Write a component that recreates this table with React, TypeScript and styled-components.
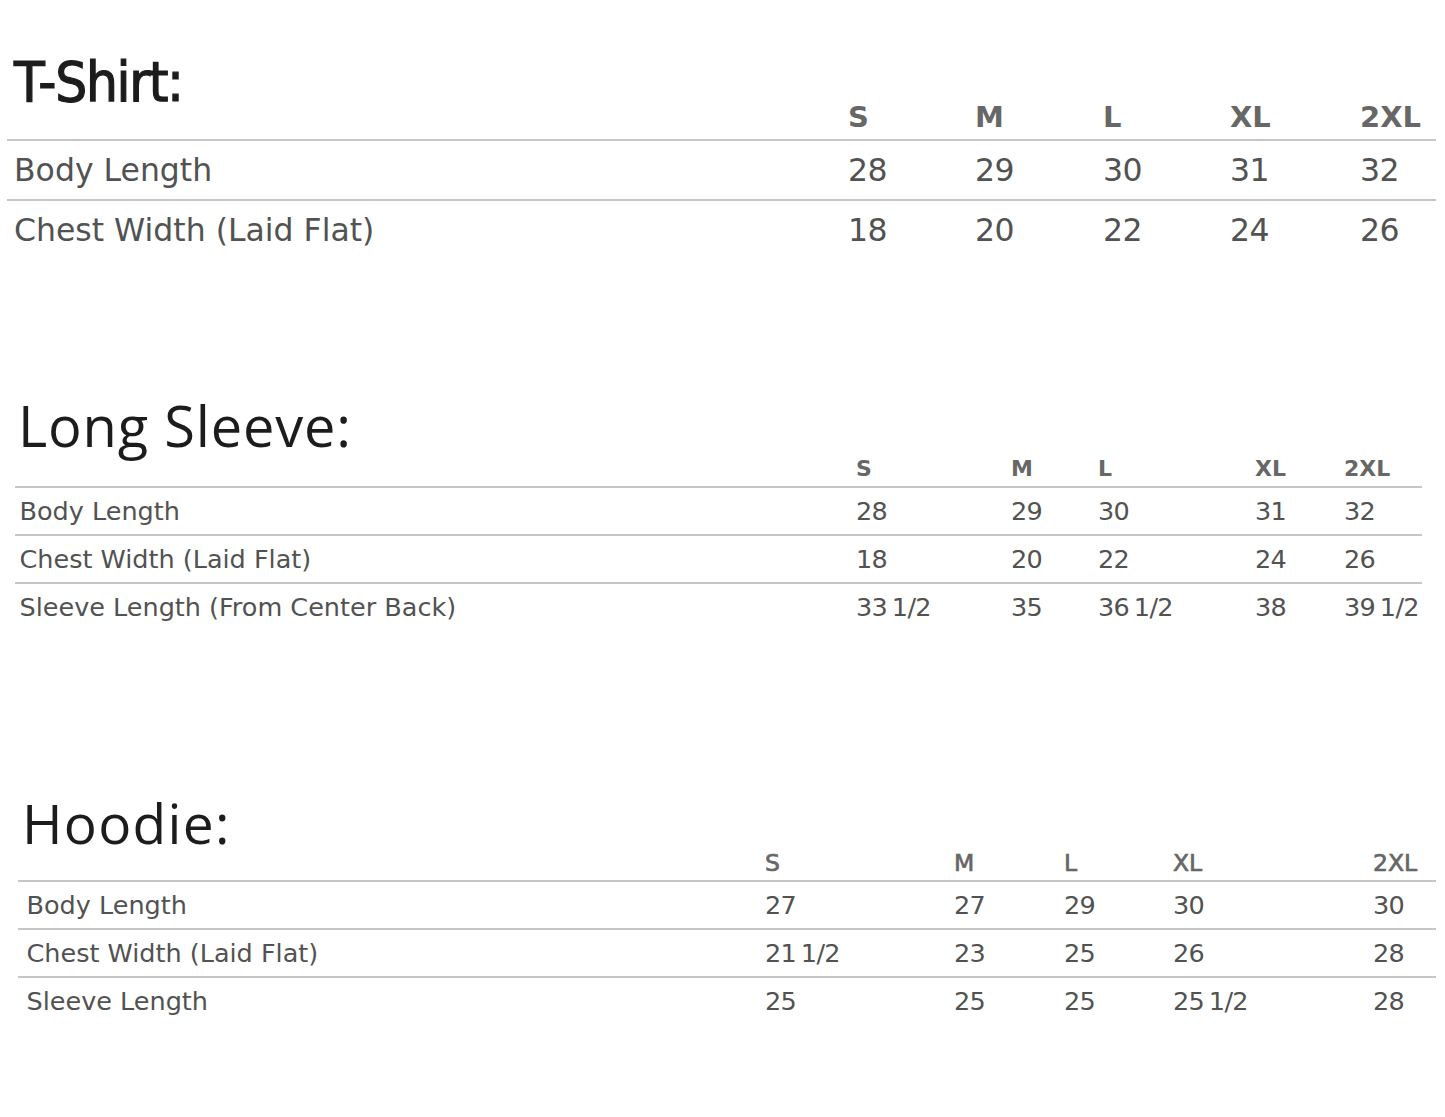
import React from "react";
import styled, { createGlobalStyle } from "styled-components";

type Chart = {
  title: string;
  titleFont: string;
  titleSize: number;
  titleSpacing: number;
  titleStroke: number;
  titleTop: number;
  titleLeft: number;
  titleLine: number;
  tableLeft: number;
  tableWidth: number;
  labelPad: number;
  columns: string;
  headSize: number;
  headWeight: number;
  headLine: number;
  headPad: number;
  headGap: number;
  rowSize: number;
  rowLine: number;
  sizes: string[];
  rows: { label: string; values: string[] }[];
};

const charts: Chart[] = [
  {
    title: "T-Shirt:",
    titleFont: `"DejaVu Sans Condensed", "DejaVu Sans", sans-serif`,
    titleSize: 56,
    titleSpacing: -1.3,
    titleStroke: 1.2,
    titleTop: 57,
    titleLeft: 14,
    titleLine: 49,
    tableLeft: 7,
    tableWidth: 1429,
    labelPad: 7,
    columns: "841px 127px 128px 127px 130px 1fr",
    headSize: 29,
    headWeight: 700,
    headLine: 22,
    headPad: 11,
    headGap: 0,
    rowSize: 31.5,
    rowLine: 58,
    sizes: ["S", "M", "L", "XL", "2XL"],
    rows: [
      { label: "Body Length", values: ["28", "29", "30", "31", "32"] },
      { label: "Chest Width (Laid Flat)", values: ["18", "20", "22", "24", "26"] },
    ],
  },
  {
    title: "Long Sleeve:",
    titleFont: `"Open Sans", sans-serif`,
    titleSize: 56,
    titleSpacing: 0.8,
    titleStroke: 0,
    titleTop: 138,
    titleLeft: 18,
    titleLine: 56,
    tableLeft: 15,
    tableWidth: 1407,
    labelPad: 4.5,
    columns: "841px 155px 87px 157px 89px 1fr",
    headSize: 22,
    headWeight: 700,
    headLine: 22,
    headPad: 6,
    headGap: 5.4,
    rowSize: 25.5,
    rowLine: 46,
    sizes: ["S", "M", "L", "XL", "2XL"],
    rows: [
      { label: "Body Length", values: ["28", "29", "30", "31", "32"] },
      { label: "Chest Width (Laid Flat)", values: ["18", "20", "22", "24", "26"] },
      {
        label: "Sleeve Length (From Center Back)",
        values: ["33 1/2", "35", "36 1/2", "38", "39 1/2"],
      },
    ],
  },
  {
    title: "Hoodie:",
    titleFont: `"Open Sans", sans-serif`,
    titleSize: 55,
    titleSpacing: 1.3,
    titleStroke: 0,
    titleTop: 165,
    titleLeft: 22,
    titleLine: 55,
    tableLeft: 18,
    tableWidth: 1418,
    labelPad: 8.5,
    columns: "747px 189px 110px 109px 200px 1fr",
    headSize: 23.5,
    headWeight: 400,
    headLine: 23,
    headPad: 5.5,
    headGap: 1.6,
    rowSize: 25.5,
    rowLine: 46,
    sizes: ["S", "M", "L", "XL", "2XL"],
    rows: [
      { label: "Body Length", values: ["27", "27", "29", "30", "30"] },
      { label: "Chest Width (Laid Flat)", values: ["21 1/2", "23", "25", "26", "28"] },
      { label: "Sleeve Length", values: ["25", "25", "25", "25 1/2", "28"] },
    ],
  },
];

const App: React.FC = () => (
  <>
    <GlobalStyle />
    <Page>
      {charts.map((c) => (
        <Section key={c.title} $top={c.titleTop}>
          <Title
            $font={c.titleFont}
            $size={c.titleSize}
            $spacing={c.titleSpacing}
            $stroke={c.titleStroke}
            $left={c.titleLeft}
            $line={c.titleLine}
          >
            {c.title}
          </Title>
          <Table $left={c.tableLeft} $width={c.tableWidth} $gap={c.headGap}>
            <HeadRow $columns={c.columns} $pad={c.headPad}>
              <HeadCell $size={c.headSize} $weight={c.headWeight} $line={c.headLine} />
              {c.sizes.map((s) => (
                <HeadCell key={s} $size={c.headSize} $weight={c.headWeight} $line={c.headLine}>
                  {s}
                </HeadCell>
              ))}
            </HeadRow>
            {c.rows.map((r) => (
              <Row key={r.label} $columns={c.columns}>
                <Label $pad={c.labelPad} $size={c.rowSize} $line={c.rowLine}>
                  {r.label}
                </Label>
                {r.values.map((v, i) => (
                  <Value key={i} $size={c.rowSize} $line={c.rowLine}>
                    {v}
                  </Value>
                ))}
              </Row>
            ))}
          </Table>
        </Section>
      ))}
    </Page>
  </>
);

export default App;

const GlobalStyle = createGlobalStyle`
  html, body {
    margin: 0;
    padding: 0;
    background: #ffffff;
  }
  body {
    font-family: "DejaVu Sans", sans-serif;
  }
`;

const Page = styled.main`
  width: 1445px;
  min-height: 1117px;
  display: flex;
  flex-direction: column;
  overflow: hidden;
`;

const Section = styled.section<{ $top: number }>`
  display: flex;
  flex-direction: column;
  margin-top: ${(p) => p.$top}px;
`;

const Title = styled.h1<{
  $font: string;
  $size: number;
  $spacing: number;
  $stroke: number;
  $left: number;
  $line: number;
}>`
  margin: 0 0 0 ${(p) => p.$left}px;
  font-family: ${(p) => p.$font};
  font-size: ${(p) => p.$size}px;
  line-height: ${(p) => p.$line}px;
  letter-spacing: ${(p) => p.$spacing}px;
  font-weight: 400;
  color: #1c1c1c;
  -webkit-text-stroke: ${(p) => p.$stroke}px #1c1c1c;
`;

const Table = styled.div<{ $left: number; $width: number; $gap: number }>`
  margin-left: ${(p) => p.$left}px;
  margin-top: ${(p) => p.$gap}px;
  width: ${(p) => p.$width}px;
  display: flex;
  flex-direction: column;
`;

const Row = styled.div<{ $columns: string }>`
  display: grid;
  grid-template-columns: ${(p) => p.$columns};
  border-bottom: 2px solid #c6c6c6;

  &:last-child {
    border-bottom: none;
  }
`;

const HeadRow = styled(Row)<{ $pad: number }>`
  padding-bottom: ${(p) => p.$pad}px;
`;

const HeadCell = styled.div<{ $size: number; $weight: number; $line: number }>`
  font-family: "DejaVu Sans", sans-serif;
  font-size: ${(p) => p.$size}px;
  font-weight: ${(p) => p.$weight};
  line-height: ${(p) => p.$line}px;
  color: #676767;
  -webkit-text-stroke: ${(p) => (p.$weight < 700 ? "0.7px #676767" : "0")};
`;

const Value = styled.div<{ $size: number; $line: number }>`
  font-family: "DejaVu Sans", sans-serif;
  font-size: ${(p) => p.$size}px;
  line-height: ${(p) => p.$line}px;
  color: #525252;
  white-space: nowrap;
  letter-spacing: -0.6px;
  word-spacing: -3px;
`;

const Label = styled(Value)<{ $pad: number }>`
  padding-left: ${(p) => p.$pad}px;
  letter-spacing: 0;
  word-spacing: 0;
`;
